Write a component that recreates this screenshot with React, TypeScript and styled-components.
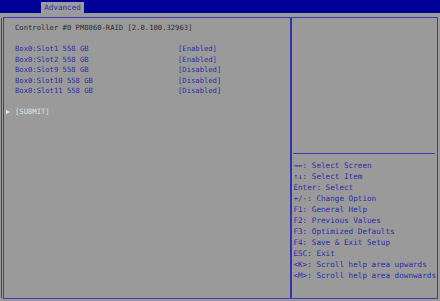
import React from "react";
import styled, { createGlobalStyle } from "styled-components";

const GlobalStyle = createGlobalStyle`
  html, body {
    margin: 0;
    padding: 0;
    background: #9a9a9a;
  }
  body {
    width: 440px;
    height: 301px;
    overflow: hidden;
    font-family: "DejaVu Sans Mono", "Liberation Mono", monospace;
  }
`;

const Screen = styled.div`
  width: 440px;
  height: 301px;
  display: flex;
  flex-direction: column;
  background: #9a9a9a;
`;

const TopBar = styled.div`
  height: 13px;
  background: #000096;
  display: flex;
  align-items: flex-end;
  padding-left: 41px;
`;

const Tab = styled.div`
  height: 11px;
  width: 43px;
  background: #9c9c9c;
  color: #2e2ea6;
  font-size: 7.6px;
  line-height: 11px;
  text-align: center;
`;

const Frame = styled.div`
  margin: 4px 2px 2px 3px;
  flex: 1;
  display: flex;
  border: 1px solid #3c3cb4;
  box-shadow: -2px 0 0 -1px #9a9a9a, -3px 0 0 -1px #3c3cb4;
`;

const MainPanel = styled.div`
  width: 290px;
  padding: 5px 0 0 11px;
  box-sizing: border-box;
  border-right: 2px solid #3434b0;
  font-size: 7.2px;
  line-height: 10.5px;
  white-space: pre;
`;

const Row = styled.div<{ tone?: "dark" | "blue" | "light" }>`
  height: 10.5px;
  display: grid;
  grid-template-columns: 163px auto;
  position: relative;
  color: ${p => (p.tone === "dark" ? "#2c2c2c" : p.tone === "light" ? "#e2e2e2" : "#2e2ea6")};
`;

const Pointer = styled.span`
  position: absolute;
  left: -9px;
  top: 3px;
  width: 0;
  height: 0;
  border-top: 2.5px solid transparent;
  border-bottom: 2.5px solid transparent;
  border-left: 4px solid #f0f0f0;
`;

const HelpPanel = styled.div`
  flex: 1;
  display: flex;
  flex-direction: column;
  padding: 0 1px 0 1px;
`;

const HelpTop = styled.div`
  height: 135px;
  border-bottom: 1px solid #3c3cb4;
  margin-right: 1px;
`;

const KeyList = styled.div`
  padding: 6px 0 0 0;
  font-size: 7.65px;
  line-height: 11px;
  color: #2e2ea6;
  white-space: pre;
`;

const items = [
  ["Box0:Slot1 558 GB", "[Enabled]"],
  ["Box0:Slot2 558 GB", "[Enabled]"],
  ["Box0:Slot9 558 GB", "[Disabled]"],
  ["Box0:Slot10 558 GB", "[Disabled]"],
  ["Box0:Slot11 558 GB", "[Disabled]"],
];

const keys = [
  "\u2192\u2190: Select Screen",
  "\u2191\u2193: Select Item",
  "Enter: Select",
  "+/-: Change Option",
  "F1: General Help",
  "F2: Previous Values",
  "F3: Optimized Defaults",
  "F4: Save & Exit Setup",
  "ESC: Exit",
  "<K>: Scroll help area upwards",
  "<M>: Scroll help area downwards",
];

export default function App() {
  return (
    <Screen>
      <GlobalStyle />
      <TopBar>
        <Tab>Advanced</Tab>
      </TopBar>
      <Frame>
        <MainPanel>
          <Row tone="dark">Controller #0 PM8060-RAID [2.0.100.32963]</Row>
          <Row />
          {items.map(([name, value]) => (
            <Row key={name} tone="blue">
              <span>{name}</span>
              <span>{value}</span>
            </Row>
          ))}
          <Row />
          <Row tone="light">
            <Pointer />
            <span>[SUBMIT]</span>
          </Row>
        </MainPanel>
        <HelpPanel>
          <HelpTop />
          <KeyList>
            {keys.map(k => (
              <div key={k}>{k}</div>
            ))}
          </KeyList>
        </HelpPanel>
      </Frame>
    </Screen>
  );
}
